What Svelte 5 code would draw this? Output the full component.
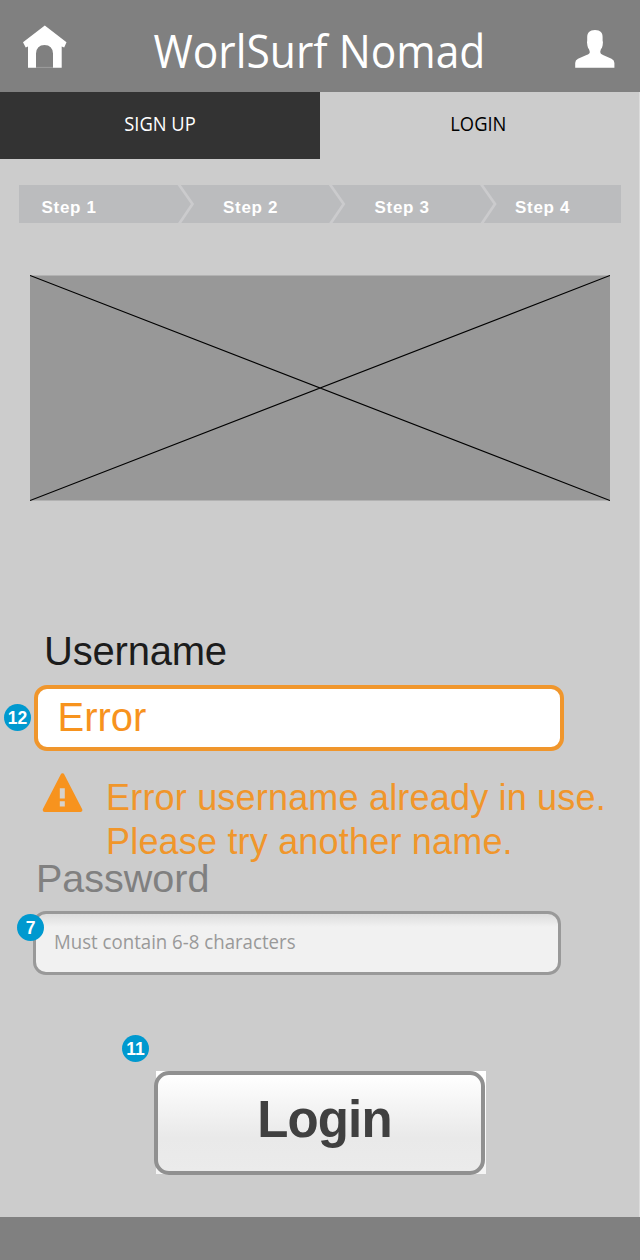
<script>
  const steps = [
    { name: 'Step 1', width: 181.5 },
    { name: 'Step 2', width: 151.5 },
    { name: 'Step 3', width: 140.5 },
    { name: 'Step 4', width: 105 }
  ];
  const dividers = [178.5, 329.7, 481];
</script>

<main>
  <header>
    <svg class="home" viewBox="0 0 44 43" width="44" height="43" aria-label="Home">
      <path d="M21.8 .5 43.5 17.2 41.2 22.5 38.7 21.5V42.7H30V28.5Q29.5 20 21.5 20T13 28.5V42.7H5V21.5L2.7 22.5 0 17.2Z" fill="#fff" />
      <path d="M13 42.4H30" stroke="#aaa" stroke-width=".7" />
    </svg>
    <h1><span>WorlSurf Nomad</span></h1>
    <svg class="user" viewBox="0 0 40 38" width="40" height="38" aria-label="Account">
      <path d="M20 0C25.5 0 27.8 2.8 27.6 7.5V10.5Q28.3 11.5 27.6 15.5Q27.2 18 26 19Q25.5 20.5 25.2 22Q25.2 24 28 25L36.5 28.7Q39.4 30 39.4 33V37.8H.2V33Q.2 30 3 28.7L11.5 25Q14.8 24 14.8 22Q14.5 20.5 13.9 19Q12.8 18 12.4 15.5Q11.7 11.5 12.2 10.5V7.5C12.2 2.8 14.5 0 20 0Z" fill="#fff" />
    </svg>
  </header>

  <nav>
    <div class="tab dark"><span>SIGN UP</span></div>
    <div class="tab"><span>LOGIN</span></div>
  </nav>

  <div class="page">
    <div class="steps">
      {#each steps as step}
        <span class="step" style="width: {step.width}px">{step.name}</span>
      {/each}
      <svg class="dividers" viewBox="19 185 602 38" width="602" height="38">
        {#each dividers as x}
          <path d="M{x} 184 {x + 14} 204 {x + 0.5} 224" fill="none" stroke="#cbcbcd" stroke-width="2.7" />
        {/each}
      </svg>
    </div>

    <svg class="placeholder" viewBox="0 0 580 226" width="580" height="226">
      <rect y=".5" width="580" height="225" fill="#989898" />
      <path d="M0 .5 580 225.5M580 .5 0 225.5" stroke="#000" stroke-width="1.15" />
    </svg>

    <label class="username" for="user">Username</label>
    <div class="field error" id="user">
      Error
      <b class="badge b12"><span>12</span></b>
    </div>

    <div class="message">
      <svg viewBox="0 0 41 40" width="41" height="40">
        <path d="M20.5 2.3 38.3 37H2.7Z" fill="#f7931e" stroke="#f7931e" stroke-width="4" stroke-linejoin="round" />
        <path d="M17.8 15.2h5v10.3h-5zM17.8 28.2h5v5.3h-5z" fill="#d6d2cc" />
      </svg>
      <p>Error username already in use.<br />Please try another name.</p>
    </div>

    <label class="password" for="pass">Password</label>
    <div class="field pass" id="pass">
      <span class="hint">Must contain 6-8 characters</span>
      <b class="badge b7"><span>7</span></b>
    </div>

    <div class="action">
      <button>Login</button>
      <b class="badge b11"><span>11</span></b>
    </div>
  </div>

  <footer></footer>
</main>

<style>
  :global(body) { margin: 0; background: #ccc; }
  main {
    box-sizing: border-box;
    width: 640px;
    height: 1260px;
    display: flex;
    flex-direction: column;
    overflow: hidden;
    background: #ccc;
    font-family: "Liberation Sans", Arial, sans-serif;
  }
  header {
    box-sizing: border-box;
    height: 92px;
    flex: none;
    display: flex;
    justify-content: space-between;
    align-items: flex-start;
    padding: 0 25px 0 23px;
    background: #808080;
  }
  .home { margin-top: 25px; }
  .user { margin-top: 30px; }
  h1 {
    box-sizing: border-box;
    margin: 0;
    padding-right: 3px;
    font: 400 46px/100px "Open Sans", "Noto Sans", sans-serif;
    color: #fff;
    width: 340px;
    display: flex;
    justify-content: center;
    white-space: nowrap;
  }
  h1 span { transform: scaleX(.925); }
  nav { display: flex; height: 66.5px; flex: none; }
  .tab {
    box-sizing: border-box;
    width: 320px;
    display: flex;
    justify-content: center;
    font: 400 20.5px/62px "Open Sans", "Noto Sans", sans-serif;
    color: #000;
  }
  .tab:last-child { padding-right: 3px; border-right: 1px solid #dcdcdc; }
  .tab span { transform: scaleX(.895); }
  .dark { background: #333; color: #fff; }
  .page {
    box-sizing: border-box;
    height: 1058.5px;
    flex: none;
    padding-top: 26.5px;
    border-right: 1px solid #dcdcdc;
  }
  .steps {
    position: relative;
    box-sizing: border-box;
    display: flex;
    width: 602px;
    height: 38px;
    margin-left: 19px;
    padding-left: 22.5px;
    background: #bbbcbe;
  }
  .step {
    flex: none;
    font-weight: 700;
    font-size: 17px;
    line-height: 46px;
    letter-spacing: .7px;
    color: #fff;
    position: relative;
    z-index: 1;
  }
  .step:last-of-type { flex-shrink: 1; }
  .dividers { position: absolute; left: 0; top: 0; }
  .placeholder { display: block; margin: 52px 0 0 30px; }
  label { display: block; line-height: 44px; }
  .username { margin: 128px 0 0 44px; font-size: 40px; letter-spacing: -.2px; color: #1c1c1c; }
  .field {
    box-sizing: border-box;
    position: relative;
    display: flex;
    align-items: center;
  }
  .error {
    width: 530.5px;
    height: 66.5px;
    margin: 11.5px 0 0 33.5px;
    padding: 0 0 1px 20px;
    border: 4px solid #f0962c;
    border-radius: 13px;
    background: #fff;
    color: #f7931e;
    font-size: 40px;
    line-height: 56px;
  }
  .message {
    display: flex;
    height: 80px;
    margin: 25px 0 0 42px;
    color: #f0962b;
  }
  .message svg { flex: none; margin-top: -3px; }
  p {
    margin: 0 0 0 23px;
    font-size: 36px;
    line-height: 44px;
    letter-spacing: .19px;
    white-space: nowrap;
  }
  .password { margin-left: 36px; font-size: 39.5px; color: #808080; }
  .pass {
    width: 528px;
    height: 64px;
    margin: 11px 0 0 33px;
    padding-left: 18px;
    border: 3.5px solid #999;
    border-radius: 13px;
    background: linear-gradient(#dcdcdc, #f1f1f1 13px);
  }
  .hint {
    font: 400 20px/28px "Open Sans", "Noto Sans", sans-serif;
    color: #999;
    transform: scaleX(.932);
    transform-origin: left;
    white-space: nowrap;
    margin-top: -2px;
  }
  .action {
    position: relative;
    width: 330.5px;
    height: 103px;
    margin: 96px 0 0 155.5px;
    background: linear-gradient(#fff, #f4f4f4);
  }
  button {
    display: block;
    box-sizing: border-box;
    width: 331px;
    height: 103.5px;
    margin: 0 0 0 -2px;
    padding: 0 0 6px 11px;
    border: 4.5px solid #909090;
    border-radius: 15px;
    background: linear-gradient(#fff, #e9e9e9 65%, #ebebeb);
    color: #404040;
    font: 700 51px/58px "Liberation Sans", Arial, sans-serif;
    letter-spacing: -.9px;
  }
  .badge {
    position: absolute;
    width: 27px;
    height: 27px;
    border-radius: 50%;
    background: #0099cf;
    color: #fff;
    font: 700 19px/27px "Liberation Sans", Arial, sans-serif;
    text-align: center;
  }
  .badge span { display: block; transform: scaleX(.92); }
  .b12 { left: -34px; top: 15px; }
  .b7 { left: -19.5px; top: -.5px; }
  .b11 { left: -34px; top: -36px; }
  footer { flex: 1; background: #808080; }
</style>
